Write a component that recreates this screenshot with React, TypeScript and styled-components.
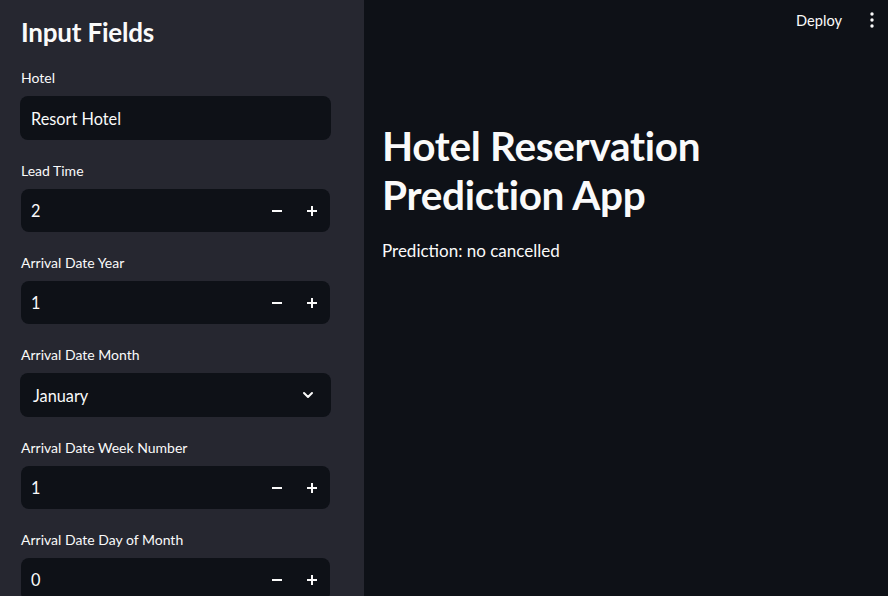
import React from 'react';
import styled, { createGlobalStyle } from 'styled-components';

const GlobalStyle = createGlobalStyle`
  html, body {
    margin: 0;
    padding: 0;
    background: #0e1117;
    color: #fafafa;
    font-family: Lato, "Noto Sans", sans-serif;
  }
  * {
    box-sizing: border-box;
  }
`;

type Field =
  | { kind: 'text'; label: string; value: string }
  | { kind: 'select'; label: string; value: string }
  | { kind: 'number'; label: string; value: string };

const fields: Field[] = [
  { kind: 'text', label: 'Hotel', value: 'Resort Hotel' },
  { kind: 'number', label: 'Lead Time', value: '2' },
  { kind: 'number', label: 'Arrival Date Year', value: '1' },
  { kind: 'select', label: 'Arrival Date Month', value: 'January' },
  { kind: 'number', label: 'Arrival Date Week Number', value: '1' },
  { kind: 'number', label: 'Arrival Date Day of Month', value: '0' },
];

const App = () => {
  return (
    <>
      <GlobalStyle />
      <Page>
        <Sidebar>
          <SidebarTitle>Input Fields</SidebarTitle>
          {fields.map((f) => (
            <Widget key={f.label}>
              <Label>{f.label}</Label>
              {f.kind === 'text' && (
                <SelectBox $pad={11}>
                  <span>{f.value}</span>
                </SelectBox>
              )}
              {f.kind === 'select' && (
                <SelectBox $pad={13}>
                  <span>{f.value}</span>
                  <svg width="16" height="16" viewBox="0 0 24 24" fill="none">
                    <path
                      d="M6 9l6 6 6-6"
                      stroke="#fafafa"
                      strokeWidth="3"
                      strokeLinecap="round"
                      strokeLinejoin="round"
                    />
                  </svg>
                </SelectBox>
              )}
              {f.kind === 'number' && (
                <NumberBox>
                  <NumberValue>{f.value}</NumberValue>
                  <StepButton aria-label="decrement">
                    <svg width="12" height="12" viewBox="0 0 12 12">
                      <rect x="1" y="5" width="10" height="2" fill="#fafafa" />
                    </svg>
                  </StepButton>
                  <StepButton aria-label="increment">
                    <svg width="12" height="12" viewBox="0 0 12 12">
                      <rect x="1" y="5" width="10" height="2" fill="#fafafa" />
                      <rect x="5" y="1" width="2" height="10" fill="#fafafa" />
                    </svg>
                  </StepButton>
                </NumberBox>
              )}
            </Widget>
          ))}
        </Sidebar>
        <Main>
          <Toolbar>
            <DeployButton>Deploy</DeployButton>
            <MenuButton aria-label="menu">
              <svg width="4" height="16" viewBox="0 0 4 16">
                <circle cx="2" cy="2" r="1.7" fill="#fafafa" />
                <circle cx="2" cy="8" r="1.7" fill="#fafafa" />
                <circle cx="2" cy="14" r="1.7" fill="#fafafa" />
              </svg>
            </MenuButton>
          </Toolbar>
          <Content>
            <Title>Hotel Reservation Prediction App</Title>
            <Paragraph>Prediction: no cancelled</Paragraph>
          </Content>
        </Main>
      </Page>
    </>
  );
};

export default App;

const Page = styled.div`
  display: flex;
  height: 596px;
  overflow: hidden;
`;

const Sidebar = styled.aside`
  width: 364px;
  flex-shrink: 0;
  background: #262730;
  padding: 15px 33px 0 20px;
  display: flex;
  flex-direction: column;
  overflow: hidden;
`;

const SidebarTitle = styled.h2`
  margin: 0 0 18px 1px;
  font-size: 26px;
  font-weight: 700;
  line-height: 34px;
  letter-spacing: -0.2px;
`;

const Widget = styled.div`
  display: flex;
  flex-direction: column;
  margin-bottom: 20px;
`;

const Label = styled.label`
  font-size: 14px;
  line-height: 22px;
  margin: 0 0 7px 1px;
  color: #fafafa;
`;

const SelectBox = styled.div<{ $pad: number }>`
  height: 44px;
  background: #0e1117;
  border-radius: 8px;
  display: flex;
  align-items: center;
  justify-content: space-between;
  padding: 0 15px 0 ${(p) => p.$pad}px;
  font-size: 16.3px;
`;

const NumberBox = styled.div`
  height: 43px;
  margin: 0 1px;
  background: #0e1117;
  border-radius: 8px;
  display: flex;
  align-items: center;
  padding: 0 1px 0 10px;
  font-size: 16.3px;
`;

const NumberValue = styled.span`
  flex: 1;
`;

const StepButton = styled.button`
  width: 35px;
  height: 100%;
  background: none;
  border: 0;
  padding: 0;
  display: flex;
  align-items: center;
  justify-content: center;
  cursor: pointer;
`;

const Main = styled.main`
  flex: 1;
  display: flex;
  flex-direction: column;
  min-width: 0;
`;

const Toolbar = styled.header`
  height: 40px;
  display: flex;
  align-items: center;
  justify-content: flex-end;
  gap: 20px;
  padding: 0 14px 0 0;
`;

const DeployButton = styled.button`
  background: none;
  border: 0;
  color: #fafafa;
  font-family: inherit;
  font-size: 14.6px;
  padding: 0 8px;
  cursor: pointer;
`;

const MenuButton = styled.button`
  background: none;
  border: 0;
  padding: 0;
  display: flex;
  cursor: pointer;
`;

const Content = styled.section`
  padding: 81px 18px 0 18px;
`;

const Title = styled.h1`
  margin: 0 0 20px;
  max-width: 470px;
  font-size: 40.5px;
  font-weight: 700;
  line-height: 49px;
  letter-spacing: -0.3px;
`;

const Paragraph = styled.p`
  margin: 0;
  font-size: 17px;
  line-height: 24px;
`;
